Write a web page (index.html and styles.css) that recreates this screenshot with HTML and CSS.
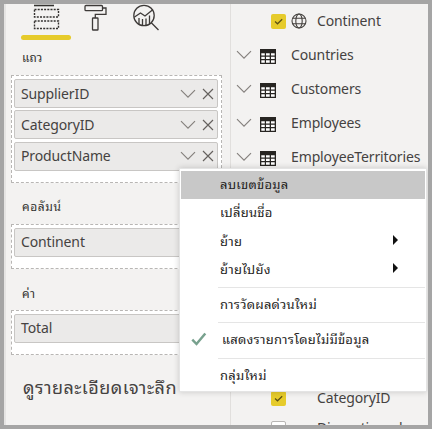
FILE: index.html
```html
<!DOCTYPE html>
<html lang="th">
<head>
<meta charset="utf-8">
<title>Power BI</title>
<link rel="stylesheet" href="styles.css">
</head>
<body>
<svg width="0" height="0" class="defs">
  <symbol id="down" viewBox="0 0 16 10"><path d="M1 1.2 8 8.2 15 1.2" fill="none" stroke="#85817d" stroke-width="1.15"/></symbol>
  <symbol id="close" viewBox="0 0 12 12"><path d="M1 1 11 11M11 1 1 11" fill="none" stroke="#65615e" stroke-width="1.15"/></symbol>
  <symbol id="table" viewBox="0 0 16 15"><path d="M0 0h16v15H0z" fill="#272522"/><path d="M1.3 4.3h3.5v2.3H1.3zM6 4.3h3.7v2.3H6zM11 4.3h3.7v2.3H11zM1.3 7.8h3.5v2.3H1.3zM6 7.8h3.7v2.3H6zM11 7.8h3.7v2.3H11zM1.3 11.3h3.5v2.4H1.3zM6 11.3h3.7v2.4H6zM11 11.3h3.7v2.4H11z" fill="#fff"/></symbol>
  <symbol id="tick" viewBox="0 0 15 15"><path d="M4 7.5 6.5 9.8 11.2 5.2" fill="none" stroke="#5c5113" stroke-width="1.2"/></symbol>
</svg>
<div class="window">
  <section class="build">
    <div class="tabs">
      <svg class="tab-fields" width="28" height="26" viewBox="0 0 28 26" fill="none" stroke="#343230"><path d="M1 1.5h20" stroke-width="1.6"/><path d="M1.5 5.5h24v7.5h-24zM1.5 17h24v7.5h-24z" stroke-width="1.4" stroke-dasharray="2 1.2"/></svg>
      <svg class="tab-format" width="24" height="27" viewBox="0 0 24 27" fill="none" stroke="#3d3a38" stroke-width="1.3"><rect x="1" y="1.5" width="17.5" height="5.2" rx="1"/><path d="M18.5 4H22v6.3H11.3V14"/><rect x="8.5" y="14" width="5.5" height="12" rx=".6"/></svg>
      <svg class="tab-analytics" width="27" height="27" viewBox="0 0 27 27" fill="none" stroke="#3d3a38" stroke-width="1.3"><circle cx="11" cy="11.5" r="10.2"/><path d="M18.3 18.8 25.5 26M1.5 13l6-4 4.5 3L20 5.5M6 20v-6M9.5 21.5V15M13 21.5v-7M16.5 20v-8.5"/></svg>
    </div>
    <div class="active-bar"></div>
    <h2 class="label label-rows">แถว</h2>
    <div class="well">
      <div class="chip"><span>SupplierID</span><svg class="down"><use href="#down"/></svg><svg class="close"><use href="#close"/></svg></div>
      <div class="chip"><span>CategoryID</span><svg class="down"><use href="#down"/></svg><svg class="close"><use href="#close"/></svg></div>
      <div class="chip"><span>ProductName</span><svg class="down"><use href="#down"/></svg><svg class="close"><use href="#close"/></svg></div>
    </div>
    <h2 class="label label-columns">คอลัมน์</h2>
    <div class="well"><div class="chip"><span>Continent</span></div></div>
    <h2 class="label label-values">ค่า</h2>
    <div class="well"><div class="chip"><span>Total</span></div></div>
    <h1 class="drill">ดูรายละเอียดเจาะลึก</h1>
  </section>
  <section class="fields">
    <div class="row child"><span class="box on"><svg><use href="#tick"/></svg></span><svg class="globe" viewBox="0 0 16 16" fill="none" stroke="#45423f" stroke-width="1.1"><circle cx="8" cy="8" r="7"/><ellipse cx="8" cy="8" rx="3.2" ry="7"/><path d="M1.8 5.3h12.4M1.8 10.7h12.4"/></svg><span>Continent</span></div>
    <div class="row"><svg class="down"><use href="#down"/></svg><svg class="table"><use href="#table"/></svg><span>Countries</span></div>
    <div class="row"><svg class="down"><use href="#down"/></svg><svg class="table"><use href="#table"/></svg><span>Customers</span></div>
    <div class="row"><svg class="down"><use href="#down"/></svg><svg class="table"><use href="#table"/></svg><span>Employees</span></div>
    <div class="row"><svg class="down"><use href="#down"/></svg><svg class="table"><use href="#table"/></svg><span>EmployeeTerritories</span></div>
    <div class="row child later"><span class="box on"><svg><use href="#tick"/></svg></span><i class="globe"></i><span>CategoryID</span></div>
    <div class="row child last"><span class="box"></span><i class="globe"></i><span>Discontinued</span></div>
  </section>
  <div class="menu">
    <div class="item selected">ลบเขตข้อมูล</div>
    <div class="item">เปลี่ยนชื่อ</div>
    <div class="item">ย้าย<b class="arrow"></b></div>
    <div class="item">ย้ายไปยัง<b class="arrow"></b></div>
    <div class="line"></div>
    <div class="item">การวัดผลด่วนใหม่</div>
    <div class="line"></div>
    <div class="item checked"><svg class="check" viewBox="0 0 16 15"><path d="M1.3 7.7 5.5 12 14.3 1.5" fill="none" stroke="#78a18e" stroke-width="2.5"/></svg>แสดงรายการโดยไม่มีข้อมูล</div>
    <div class="line"></div>
    <div class="item">กลุ่มใหม่</div>
  </div>
</div>
</body>
</html>
```
FILE: styles.css
```css
* { box-sizing: border-box; }
body { margin: 0; }
.defs { position: absolute; }
.window {
  --thai: "Noto Sans Thai Looped", "Leelawadee UI", Loma, Waree, Garuda, Umpush, "Noto Sans Thai", "Noto Sans", sans-serif;
  position: relative;
  display: flex;
  width: 432px;
  height: 429px;
  border: 4px solid #a5a5a5;
  background: #f3f2f1;
  overflow: hidden;
  color: #454241;
  font: 14px/20px "Noto Sans", "Open Sans", sans-serif;
  letter-spacing: -.12px;
}
.build {
  flex: 0 0 227px;
  padding-left: 5px;
  border-left: 2px solid #e5e4e3;
  border-right: 1px solid #e1dfdd;
}
.tabs { display: flex; height: 31px; padding-left: 22px; }
.tab-fields { margin-right: 22px; }
.tab-format { margin: 0 25px 0 1px; }
.active-bar { width: 50px; height: 5px; margin-left: 10px; border-radius: 3px; background: #e6cb2b; }
.label { margin: 0; padding-left: 11px; font: 12px/18px var(--thai); letter-spacing: 0; color: #343230; }
.label-rows { height: 35px; padding-top: 8px; }
.label-columns { height: 41px; padding-top: 14px; letter-spacing: .6px; }
.label-values { height: 41px; padding-top: 15px; letter-spacing: .6px; }
.well {
  width: 211px;
  padding: 3px 3px 11px 2px;
  border: 1px dashed #b8b6b4;
  background: #fff;
}
.chip {
  display: flex;
  align-items: center;
  height: 29px;
  padding: 0 3px 0 6px;
  border: 1px solid #c8c6c4;
  border-radius: 2px;
  background: #ebeae9;
}
.chip + .chip { margin-top: 2.4px; }
.chip span { flex: 1; white-space: nowrap; }
.down { width: 16px; height: 10px; }
.chip .close { width: 12px; height: 12px; margin-left: 6px; }
.drill { margin: 19px 0 0 12px; font: 18px/24px var(--thai); letter-spacing: .45px; white-space: nowrap; }
.fields { flex: 1; min-width: 0; }
.row { display: flex; align-items: center; height: 34px; padding-left: 5px; white-space: nowrap; }
.row .table { width: 16px; height: 15px; margin: 2px 15px 0 8px; }
.child { padding-left: 40px; }
.box { width: 15px; height: 15px; border: 1px solid #b8b6b4; border-radius: 2px; background: #fff; }
.box.on { border: 0; background: #e6cb2b; }
.box svg { display: block; width: 15px; height: 15px; }
.globe { width: 16px; height: 16px; margin: 0 10px 0 5px; }
.later { margin-top: 207px; }
.last { margin-top: -4px; }
.menu {
  position: absolute;
  left: 175px;
  top: 164px;
  width: 248px;
  height: 224px;
  padding: 2px 1px;
  border: 1px solid #e4e4e4;
  background: #fff;
  box-shadow: 0 0 6px rgba(0, 0, 0, .18);
  font: 13px/26px var(--thai);
  letter-spacing: .25px;
  color: #252423;
}
.item { position: relative; height: 28.3px; padding-left: 39px; white-space: nowrap; }
.selected { background: #c8c8c8; }
.line { height: 1px; margin: 3px 0 3px 37px; background: #e5e5e5; }
.checked { padding-left: 41px; }
.check { position: absolute; left: 10px; top: 6px; width: 16px; height: 15px; }
.arrow { position: absolute; left: 212px; top: 7px; border: 5px solid transparent; border-left-color: #111; border-right: 0; }
```
